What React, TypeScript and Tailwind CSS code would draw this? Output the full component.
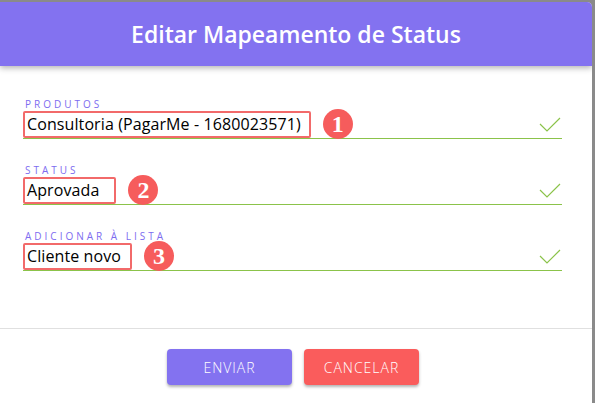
const fields = [
  { label: "PRODUTOS", value: "Consultoria (PagarMe - 1680023571)", n: "1", pad: "pr-[8px]" },
  { label: "STATUS", value: "Aprovada", n: "2", pad: "pr-[15px]" },
  { label: "ADICIONAR À LISTA", value: "Cliente novo", n: "3", pad: "pr-[9px]" },
];

function Check() {
  return (
    <svg width="22" height="15" viewBox="0 0 22 15" fill="none" className="mb-[6px] mr-[1px]">
      <polyline points="1,7 8,14 21,1" stroke="#8bc34a" strokeWidth="1.2" />
    </svg>
  );
}

function Field({ label, value, n, pad }: { label: string; value: string; n: string; pad: string }) {
  return (
    <div className="mb-[25px]">
      <div className="h-[12px] pl-[2px] text-[10px] leading-[12px] tracking-[3px] text-[#7d6cf0]">
        {label}
      </div>
      <div className="flex h-[29px] items-end justify-between border-b border-[#8bc34a]">
        <div className="-mb-[1px] flex items-center gap-[12px]">
          <span
            className={`flex h-[27px] items-center rounded-[2px] border-2 border-[#f26a6a] pl-[2px] ${pad} text-[16px] tracking-[0.1px] text-black`}
          >
            {value}
          </span>
          <span
            className="flex h-[30px] w-[30px] items-center justify-center rounded-full bg-[#f65c5c] pb-[1px] text-[24px] font-bold text-white"
            style={{ fontFamily: "'Liberation Serif', serif" }}
          >
            {n}
          </span>
        </div>
        <Check />
      </div>
    </div>
  );
}

export default function App() {
  return (
    <div
      className="h-[403px] w-[595px] overflow-hidden bg-[#8a8a8a] pr-[3px] pt-[2px]"
      style={{ fontFamily: "'Open Sans', 'Noto Sans', sans-serif" }}
    >
      <div className="h-full overflow-hidden rounded-tr-[5px] bg-white">
        <div className="relative flex h-[64px] items-center justify-center bg-[#8372f0] shadow-[0_2px_6px_rgba(0,0,0,0.3)]">
          <h2 className="text-[23px] font-semibold text-white">Editar Mapeamento de Status</h2>
        </div>
        <div className="h-[262px] pl-[23px] pr-[30px] pt-[32px]">
          {fields.map((f) => (
            <Field key={f.label} {...f} />
          ))}
        </div>
        <div className="flex justify-center gap-[12px] border-t border-[#e0e0e0] pr-[6px] pt-[20px]">
          <button className="h-[36px] w-[125px] rounded-[4px] bg-[#8372f0] text-[14px] font-light tracking-[1px] text-white shadow-[0_2px_3px_rgba(0,0,0,0.3)]">
            ENVIAR
          </button>
          <button className="h-[36px] w-[115px] rounded-[4px] bg-[#fa5c5c] text-[14px] font-light tracking-[1px] text-white shadow-[0_2px_3px_rgba(0,0,0,0.3)]">
            CANCELAR
          </button>
        </div>
      </div>
    </div>
  );
}
